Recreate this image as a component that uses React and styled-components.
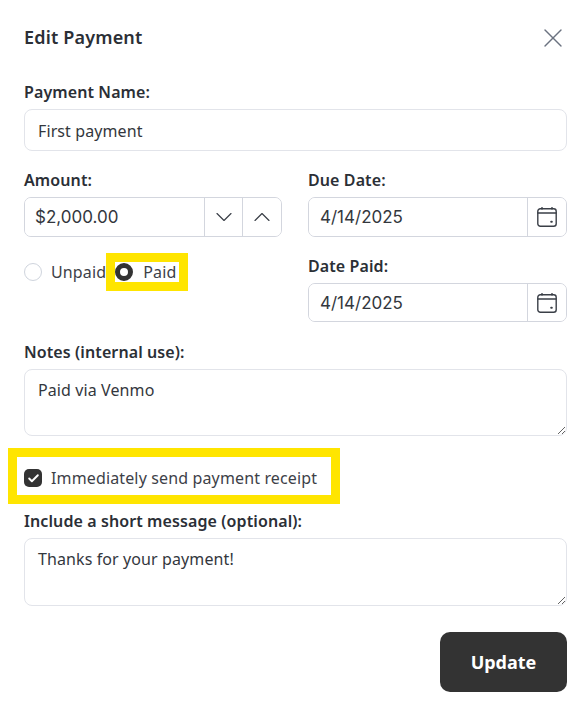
import React from 'react';
import styled, { createGlobalStyle } from 'styled-components';
import { X, ChevronDown, ChevronUp, Check } from 'lucide-react';

const GlobalStyle = createGlobalStyle`
  * { box-sizing: border-box; }
  body {
    margin: 0;
    background: #fff;
    color: #2e3238;
    font-family: "Noto Sans", "Open Sans", sans-serif;
  }
`;

const Modal = styled.form`
  width: 587px;
  height: 713px;
  padding: 0 20px 0 24px;
  display: flex;
  flex-direction: column;
`;

const Header = styled.div`
  height: 81px;
  padding-top: 25px;
  display: flex;
  align-items: flex-start;
  justify-content: space-between;
`;

const Title = styled.h2`
  margin: 0;
  font-size: 18px;
  font-weight: 600;
  letter-spacing: 0.17px;
  line-height: 24px;
  color: #2b2f36;
`;

const CloseButton = styled.button`
  border: 0;
  background: none;
  padding: 0;
  margin: -3px -2px 0 0;
  display: flex;
  color: #6b7280;
`;

const Label = styled.label`
  display: block;
  font-size: 16px;
  font-weight: 600;
  letter-spacing: 0.1px;
  line-height: 22px;
  height: 22px;
  margin-bottom: 6px;
  color: #2b2f36;
`;

const TextInput = styled.input`
  display: block;
  width: 100%;
  height: 42px;
  padding: 1px 13px 0;
  border: 1px solid #e2e4ea;
  border-radius: 8px;
  font: inherit;
  font-size: 16px;
  letter-spacing: 0.1px;
  color: #33373d;
  outline: none;
`;

const TextArea = styled.textarea`
  display: block;
  width: 100%;
  height: ${(p) => p.$height}px;
  padding: 8px 13px;
  border: 1px solid #e2e4ea;
  border-radius: 8px;
  font: inherit;
  font-size: 16px;
  letter-spacing: 0.1px;
  line-height: 24px;
  color: #33373d;
  outline: none;
`;

const Columns = styled.div`
  display: grid;
  grid-template-columns: 258px 259px;
  justify-content: space-between;
  margin-top: 18px;
`;

const Column = styled.div`
  display: flex;
  flex-direction: column;
`;

const Field = styled.div`
  margin-top: ${(p) => p.$top || 0}px;
`;

const Group = styled.div`
  display: flex;
  height: ${(p) => p.$height || 40}px;
  border: 1px solid #d3d6de;
  border-radius: 7px;
  overflow: hidden;
`;

const GroupInput = styled.input`
  flex: 1;
  min-width: 0;
  border: 0;
  outline: none;
  padding: 0 0 0 ${(p) => p.$pad}px;
  font-family: Inter, "Liberation Sans", sans-serif;
  font-size: 17px;
  color: #33373d;
`;

const GroupButton = styled.button`
  width: ${(p) => p.$width}px;
  border: 0;
  border-left: 1px solid #d3d6de;
  background: #fff;
  padding: 0;
  display: flex;
  align-items: center;
  justify-content: center;
  color: #3a3f47;
`;

const RadioRow = styled.div`
  display: flex;
  align-items: center;
  height: 38px;
  margin-top: 16px;
`;

const Choice = styled.label`
  display: flex;
  align-items: center;
  gap: ${(p) => p.$gap || 9}px;
  font-size: 16px;
  letter-spacing: 0.14px;
  line-height: 20px;
  color: #3d4148;
`;

const Radio = styled.input.attrs({ type: 'radio', name: 'status' })`
  appearance: none;
  width: 18px;
  height: 18px;
  margin: 0;
  border-radius: 50%;
  border: ${(p) => (p.defaultChecked ? '5px solid #333' : '1px solid #cfd4dd')};
  background: #fff;
`;

const Highlight = styled.div`
  border: 9px solid #ffe500;
  background: #fff;
`;

const PaidHighlight = styled(Highlight)`
  display: flex;
  align-items: center;
  width: 82px;
  height: 38px;
`;

const ReceiptHighlight = styled(Highlight)`
  display: flex;
  align-items: center;
  width: 332px;
  height: 56px;
  margin: 12px 0 0 -16px;
  padding: 4px 0 0 7px;
`;

const CheckBox = styled.span`
  width: 18px;
  height: 18px;
  border-radius: 5px;
  background: #333;
  color: #fff;
  display: flex;
  align-items: center;
  justify-content: center;
`;

const Footer = styled.div`
  display: flex;
  justify-content: flex-end;
  margin-top: 26px;
`;

const UpdateButton = styled.button`
  width: 127px;
  height: 60px;
  border: 0;
  border-radius: 10px;
  background: #333;
  color: #fff;
  font: inherit;
  font-size: 18px;
  font-weight: 700;
`;

const CalendarIcon = () => (
  <svg width="20" height="20" viewBox="0 0 20 20" fill="none" stroke="#3a3f47" strokeWidth="1.4" strokeLinecap="round">
    <rect x="0.8" y="1.8" width="18.4" height="17.4" rx="2.5" />
    <path d="M0.8 6h18.4M5 0.5v1.5M15 0.5v1.5" />
    <path d="M14.2 14.8h.6" strokeWidth="2" />
  </svg>
);

const DateField = ({ label, top, height, value }) => (
  <Field $top={top}>
    <Label>{label}</Label>
    <Group $height={height}>
      <GroupInput $pad={11} defaultValue={value} />
      <GroupButton type="button" $width={39}>
        <CalendarIcon />
      </GroupButton>
    </Group>
  </Field>
);

const App = () => {
  return (
    <Modal onSubmit={(e) => e.preventDefault()}>
      <GlobalStyle />
      <Header>
        <Title>Edit Payment</Title>
        <CloseButton type="button" aria-label="Close">
          <X size={32} strokeWidth={1} />
        </CloseButton>
      </Header>

      <Label>Payment Name:</Label>
      <TextInput defaultValue="First payment" />

      <Columns>
        <Column>
          <Label>Amount:</Label>
          <Group>
            <GroupInput $pad={10} defaultValue="$2,000.00" />
            <GroupButton type="button" $width={38}>
              <ChevronDown size={28} strokeWidth={1} />
            </GroupButton>
            <GroupButton type="button" $width={39}>
              <ChevronUp size={28} strokeWidth={1} />
            </GroupButton>
          </Group>
          <RadioRow>
            <Choice>
              <Radio />
              Unpaid
            </Choice>
            <PaidHighlight>
              <Choice $gap={10}>
                <Radio defaultChecked />
                Paid
              </Choice>
            </PaidHighlight>
          </RadioRow>
        </Column>
        <Column>
          <DateField label="Due Date:" value="4/14/2025" />
          <DateField label="Date Paid:" value="4/14/2025" top={18} height={39} />
        </Column>
      </Columns>

      <Field $top={19}>
        <Label>Notes (internal use):</Label>
        <TextArea $height={67} defaultValue="Paid via Venmo" />
      </Field>

      <ReceiptHighlight>
        <Choice>
          <CheckBox>
            <Check size={13} strokeWidth={3.5} />
          </CheckBox>
          Immediately send payment receipt
        </Choice>
      </ReceiptHighlight>

      <Field $top={6}>
        <Label>Include a short message (optional):</Label>
        <TextArea $height={68} defaultValue="Thanks for your payment!" />
      </Field>

      <Footer>
        <UpdateButton>Update</UpdateButton>
      </Footer>
    </Modal>
  );
};

export default App;
